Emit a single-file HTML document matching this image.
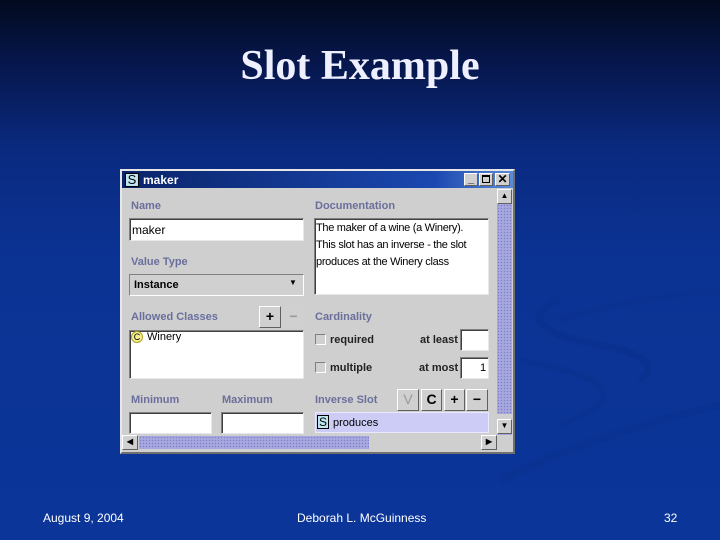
<!DOCTYPE html>
<html><head><style>
*{margin:0;padding:0;box-sizing:border-box}
body{width:720px;height:540px;overflow:hidden;position:relative;font-family:"Liberation Sans",sans-serif;
background:linear-gradient(180deg,#020a1e 0px,#06164a 60px,#0a2a80 150px,#0b3394 260px,#0b3599 540px);}
.a{position:absolute}
.t{position:absolute;font-size:11px}
.lbl{position:absolute;font-size:11px;font-weight:bold;color:#6a6f9c}
.in{position:absolute;background:#fff;border:1px solid #808080;border-right-color:#e8e8e8;border-bottom-color:#e8e8e8;box-shadow:inset 1px 1px 0 #404040}
.btn{position:absolute;background:#d0d0d0;border:1px solid #fff;border-right-color:#606060;border-bottom-color:#606060;font-weight:bold;font-size:14px;text-align:center;line-height:19px;color:#000}
.dots{background-color:#a8a8e0;background-image:radial-gradient(#8080c8 0.6px,transparent 0.9px);background-size:3px 3px}
.ft{position:absolute;top:511px;color:#fff;font-size:12px}
</style></head><body>
<div class="a" style="left:0;top:42px;width:720px;text-align:center;font-family:'Liberation Serif',serif;font-size:42px;font-weight:bold;color:#eef0ff">Slot Example</div>

<svg class="a" style="left:0;top:0" width="720" height="540">
<path d="M560 300 C520 315 540 335 600 345 C640 352 660 365 640 380" stroke="#0a2e88" stroke-width="7" fill="none" opacity=".35"/>
<path d="M520 360 C600 375 640 395 560 425" stroke="#0a2e88" stroke-width="6" fill="none" opacity=".3"/>
<path d="M500 480 C580 440 660 420 720 405" stroke="#0a2e88" stroke-width="8" fill="none" opacity=".3"/>
<path d="M560 320 C620 300 680 295 720 290" stroke="#0a2e88" stroke-width="6" fill="none" opacity=".25"/>
</svg>

<div class="a" style="left:120px;top:169px;width:395px;height:285px;background:#cfcfcf;border:2px solid #e6e6e6;border-right-color:#707070;border-bottom-color:#707070"></div>
<div class="a" style="left:122px;top:171px;width:391px;height:17px;background:linear-gradient(90deg,#0a246a,#1a48b0 80%,#5a8ad8)"></div>
<div class="a" style="left:125px;top:173px;width:14px;height:14px;background:#bfe6f0;border:1px solid #000;font-size:13px;line-height:12px;text-align:center">S</div>
<div class="t" style="left:143px;top:173px;color:#fff;font-weight:bold;font-size:12px">maker</div>
<div class="btn" style="left:464px;top:173px;width:14px;height:13px;font-size:11px;line-height:10px">_</div>
<div class="btn" style="left:479px;top:173px;width:14px;height:13px"><div class="a" style="left:2px;top:1px;width:8px;height:8px;border:1px solid #000;border-top-width:2px"></div></div>
<div class="btn" style="left:495px;top:173px;width:15px;height:13px;font-size:12px;line-height:11px">✕</div>

<div class="a dots" style="left:497px;top:189px;width:15px;height:246px"></div>
<div class="btn" style="left:497px;top:189px;width:15px;height:15px;font-size:8px;line-height:12px">▲</div>
<div class="a" style="left:497px;top:414px;width:15px;height:5px;background:#cfcfcf"></div>
<div class="btn" style="left:497px;top:419px;width:15px;height:15px;font-size:8px;line-height:12px">▼</div>
<div class="a" style="left:122px;top:435px;width:375px;height:15px;background:#cfcfcf"></div>
<div class="a dots" style="left:139px;top:436px;width:230px;height:13px"></div>
<div class="btn" style="left:122px;top:435px;width:16px;height:15px;font-size:8px;line-height:12px">◀</div>
<div class="btn" style="left:481px;top:435px;width:16px;height:15px;font-size:8px;line-height:12px">▶</div>

<div class="lbl" style="left:131px;top:200px">Name</div>
<div class="lbl" style="left:315px;top:200px">Documentation</div>
<div class="in" style="left:129px;top:218px;width:175px;height:23px"></div>
<div class="t" style="left:132px;top:223px;font-size:12px">maker</div>
<div class="in" style="left:314px;top:218px;width:175px;height:77px"></div>
<div class="t" style="left:316px;top:220px;line-height:17px;font-size:11px;letter-spacing:-.3px">The maker of a wine (a Winery).<br>This slot has an inverse - the slot<br>produces at the Winery class</div>

<div class="lbl" style="left:131px;top:256px">Value Type</div>
<div class="a" style="left:129px;top:274px;width:175px;height:22px;border:1px solid #808080;border-right-color:#fff;border-bottom-color:#fff;background:#d0d0d0"></div>
<div class="t" style="left:134px;top:279px;font-weight:bold">Instance</div>
<div class="t" style="left:289px;top:278px;font-size:8px">▼</div>

<div class="lbl" style="left:131px;top:311px">Allowed Classes</div>
<div class="btn" style="left:259px;top:306px;width:22px;height:22px">+</div>
<div class="btn" style="left:283px;top:306px;width:21px;height:22px;color:#999;border-color:#d0d0d0">−</div>
<div class="in" style="left:129px;top:330px;width:175px;height:49px"></div>
<div class="a" style="left:131px;top:331px;width:12px;height:12px;border-radius:50%;background:#f4f090;border:1px solid #b0a020;font-size:9px;line-height:10px;text-align:center">C</div>
<div class="t" style="left:147px;top:331px">Winery</div>

<div class="lbl" style="left:315px;top:311px">Cardinality</div>
<div class="a" style="left:315px;top:334px;width:11px;height:11px;border:1px solid #808080;border-right-color:#fff;border-bottom-color:#fff;background:#d0d0d0"></div>
<div class="t" style="left:330px;top:334px;font-weight:bold;color:#222">required</div>
<div class="t" style="left:420px;top:334px;font-weight:bold;color:#222">at least</div>
<div class="in" style="left:460px;top:329px;width:29px;height:22px"></div>
<div class="a" style="left:315px;top:362px;width:11px;height:11px;border:1px solid #808080;border-right-color:#fff;border-bottom-color:#fff;background:#d0d0d0"></div>
<div class="t" style="left:330px;top:362px;font-weight:bold;color:#222">multiple</div>
<div class="t" style="left:419px;top:362px;font-weight:bold;color:#222">at most</div>
<div class="in" style="left:460px;top:357px;width:29px;height:22px"></div>
<div class="t" style="left:480px;top:362px">1</div>

<div class="lbl" style="left:131px;top:394px">Minimum</div>
<div class="lbl" style="left:222px;top:394px">Maximum</div>
<div class="lbl" style="left:315px;top:394px">Inverse Slot</div>
<div class="btn" style="left:397px;top:389px;width:22px;height:22px;color:#999;font-weight:normal">V</div>
<div class="btn" style="left:421px;top:389px;width:21px;height:22px">C</div>
<div class="btn" style="left:444px;top:389px;width:21px;height:22px">+</div>
<div class="btn" style="left:466px;top:389px;width:22px;height:22px">−</div>
<div class="in" style="left:129px;top:412px;width:83px;height:22px"></div>
<div class="in" style="left:221px;top:412px;width:83px;height:22px"></div>
<div class="a" style="left:315px;top:412px;width:174px;height:21px;background:#ccccf6;border:1px solid #e8e8ff"></div>
<div class="a" style="left:317px;top:415px;width:12px;height:14px;background:#bfe6f0;border:1px solid #000;font-size:12px;line-height:12px;text-align:center">S</div>
<div class="t" style="left:333px;top:417px">produces</div>

<div class="ft" style="left:43px">August 9, 2004</div>
<div class="ft" style="left:297px">Deborah L. McGuinness</div>
<div class="ft" style="left:664px">32</div>
</body></html>
